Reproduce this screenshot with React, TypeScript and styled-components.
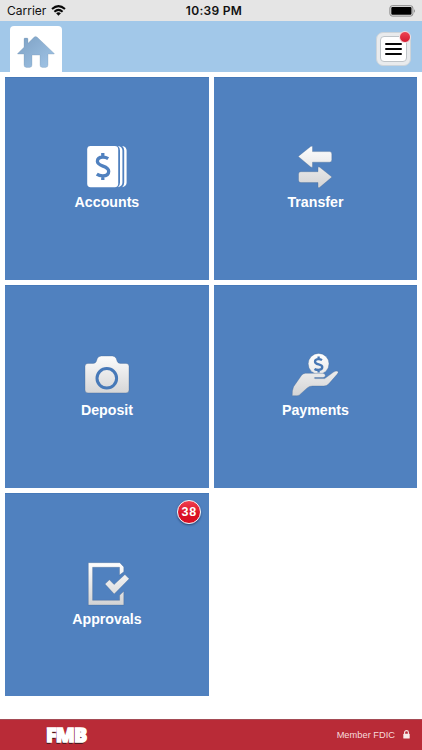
import React from "react";
import styled, { createGlobalStyle } from "styled-components";

const GlobalStyle = createGlobalStyle`
  * { box-sizing: border-box; }
  body { margin: 0; background: #fff; font-family: "Liberation Sans", Arial, sans-serif; }
  svg { display: block; }
`;

const Screen = styled.div`
  width: 422px;
  height: 750px;
  display: flex;
  flex-direction: column;
  background: #fff;
  overflow: hidden;
`;

const StatusBar = styled.div`
  height: 21px;
  flex: none;
  display: grid;
  grid-template-columns: 1fr auto 1fr;
  align-items: center;
  padding: 0 5px 0 7px;
  background: #e5e5e5;
  color: #111;
  font-family: Inter, sans-serif;
  font-size: 12px;
`;

const Carrier = styled.div`
  display: flex;
  align-items: center;
  gap: 5px;
`;

const Clock = styled.div`
  font-weight: 600;
  letter-spacing: 0.3px;
  padding-left: 4px;
`;

const BatterySlot = styled.div`
  display: flex;
  justify-content: flex-end;
`;

const Header = styled.header`
  height: 50.5px;
  flex: none;
  display: flex;
  justify-content: space-between;
  align-items: flex-start;
  padding: 5px 11px 0 10px;
  background: #a2c8e9;
`;

const HomeTab = styled.div`
  width: 51.5px;
  height: 46px;
  border-radius: 4px 4px 0 0;
  background: #fff;
  padding: 8px 0 0 7px;
`;

const MenuButton = styled.button`
  position: relative;
  width: 35px;
  height: 34px;
  margin: 6px 0 0;
  padding: 3px;
  border: 1px solid #cdd4da;
  border-radius: 7px;
  background: #e9ebed;
`;

const MenuFace = styled.span`
  display: flex;
  flex-direction: column;
  align-items: center;
  justify-content: center;
  gap: 2.6px;
  width: 27px;
  height: 26px;
  border: 1px solid #bfc4c8;
  border-radius: 4px;
  background: #fff;
`;

const MenuLine = styled.span`
  width: 17px;
  height: 2.5px;
  border-radius: 1px;
  background: #080808;
`;

const AlertDot = styled.span`
  position: absolute;
  top: -2px;
  right: -1px;
  width: 12px;
  height: 12px;
  border: 1px solid #f3dfe1;
  border-radius: 50%;
  background: linear-gradient(#ee4353, #d31a30);
`;

const Tiles = styled.main`
  flex: 1;
  display: grid;
  grid-template-columns: 203.5px 203.5px;
  grid-auto-rows: 203.4px;
  gap: 4.8px 5px;
  padding: 5px 5px 0 5.2px;
`;

const TileButton = styled.button`
  position: relative;
  display: flex;
  flex-direction: column;
  align-items: center;
  padding: 63.7px 0 0;
  border: 1px solid #4679b8;
  border-width: 1px 0 0;
  background: #5081bf;
  color: #fff;
  font-family: inherit;
`;

const TileLabel = styled.span`
  margin-top: 1px;
  font-size: 14.2px;
  font-weight: 700;
  line-height: 16px;
`;

const CountBadge = styled.span`
  position: absolute;
  top: 6px;
  right: 8px;
  width: 24px;
  height: 24px;
  display: flex;
  align-items: center;
  justify-content: center;
  border: 1.5px solid #f7f7f7;
  border-radius: 50%;
  background: linear-gradient(#f04050, #d90e23 60%);
  box-shadow: 0 1px 2px rgba(20, 30, 60, 0.6);
  font-size: 12.5px;
  font-weight: 700;
  letter-spacing: 0.8px;
  padding-left: 1px;
`;

const Footer = styled.footer`
  height: 31px;
  flex: none;
  display: flex;
  justify-content: space-between;
  align-items: center;
  padding: 0 12px 1px 46px;
  border-top: 1px solid #a44b55;
  background: #b92b37;
  color: #fff;
`;

const Brand = styled.span`
  display: block;
  font-family: "Open Sans", sans-serif;
  font-size: 20px;
  font-weight: 800;
  line-height: 20px;
  letter-spacing: -0.8px;
  transform: scaleX(0.98);
  transform-origin: left center;
  -webkit-text-stroke: 1.5px #fff;
  text-shadow: -1px 1px 0 #4d1b20, -1px 1.5px 0 #4d1b20;
`;

const Member = styled.span`
  display: flex;
  align-items: center;
  gap: 8px;
  color: #f7dcdc;
  font-size: 9.3px;
`;

const Silver = ({ id }: { id: string }) => (
  <defs>
    <linearGradient id={id} x1="0" y1="4" x2="0" y2="47" gradientUnits="userSpaceOnUse">
      <stop offset="0" stopColor="#fff" />
      <stop offset="1" stopColor="#d3d3d4" />
    </linearGradient>
  </defs>
);

const edge = { stroke: "#40628e", strokeOpacity: 0.55, strokeWidth: 0.6 };

const AccountsIcon = () => (
  <svg width="60" height="52" viewBox="0 0 60 52" fill="#fff">
    <rect x="10.2" y="5" width="31" height="41.2" rx="3.4" />
    <path d="M41 5q4.4.8 4.400 4.600v32q0 3.800-4.400 4.600q2-1.600 2-4.600V9.600q0-3-2-4.600z" />
    <path d="M45.200 5q4.400.8 4.400 4.600v32q0 3.800-4.400 4.600q2-1.600 2-4.600V9.600q0-3-2-4.600z" />
    <path d="M31.2 17.600q-2.300-1.500-5.300-1.500c-3.500 0-5.500 1.600-5.500 4.200c0 5.700 11.300 4 11.300 9.900c0 3-2.300 4.700-6 4.700q-3.500 0-5.900-1.700M25.800 12v4M25.800 35v4" fill="none" stroke="#5081bf" strokeWidth="3.300" />
  </svg>
);

const TransferIcon = () => (
  <svg width="60" height="52" viewBox="0 0 60 52" fill="url(#transfer)" strokeLinejoin="round">
    <Silver id="transfer" />
    <path {...edge} d="M13.2 15.4L25.6 5.6Q27.5 4.3 27.5 6.4v4.2H44.5q2.3 0 2.3 2.3v6q0 2.3-2.3 2.3H27.5v4q0 2-1.8.8z" />
    <path {...edge} d="M47 36L34.8 26.3Q33 25 33 27v3.7H15.8q-2.3 0-2.3 2.3v6.3q0 2.3 2.3 2.3H33v4q0 2 1.8.7z" />
  </svg>
);

const CameraIcon = () => (
  <svg width="60" height="52" viewBox="0 0 60 52" fill="url(#camera)">
    <Silver id="camera" />
    <path {...edge} d="M11 14.4h5.3q2.2 0 3-2l1-2.800Q21.3 7 24.2 7h11.2q2.8 0 3.8 2.600l1 2.800q.8 2 3 2H49q3 0 3 3v23.500q0 3-3 3H11q-3 0-3-3v-23.500q0-3 3-3z" />
    <circle cx="29.8" cy="29.300" r="9.8" fill="none" stroke="#4779b8" strokeWidth="3" />
  </svg>
);

const PaymentsIcon = () => (
  <svg width="60" height="52" viewBox="0 0 60 52" fill="url(#payments)">
    <Silver id="payments" />
    <circle {...edge} cx="33.6" cy="14.8" r="10.4" />
    <path d="M37 11.100q-1.500-1-3.400-1c-2.100 0-3.600 1-3.600 2.600c0 3.500 7.300 2 7.300 5.400c0 1.800-1.600 2.800-4 2.800q-2.200 0-3.800-1M33.600 7.500v3M33.600 20.500v3" fill="none" stroke="#4777b4" strokeWidth="2.300" />
    <path {...edge} d="M7.200 46.700Q7 41.200 8.600 37.700L16.400 26.500q1.300-2 4-2.200h17.200c3.700.2 3.500 4.200.3 4.200H29.800q-1.200.7.200 1.100h9.700l8.900-6.500q2.300-1.500 4.100-.8q1.300.8-.4 2.800L43.500 35.100q-1.800 1.900-4.600 1.900H27.400q-3 0-5.200 1.900l-8 7.300q-1.600.9-7 .5z" />
  </svg>
);

const ApprovalsIcon = () => (
  <svg width="60" height="52" viewBox="0 0 60 52" fill="url(#approvals)">
    <Silver id="approvals" />
    <path {...edge} d="M11.300 4.700h31.500l4 4.200v4.800l-4.300 3.400V9.300H15.600v33h27v-5.100l4.200-4v13.900H11.300z" />
    <path {...edge} d="M28 26.100l4.400-4.300l4.700 4.800l10.800-10.100l4.300 4.300l-15 15.200z" />
  </svg>
);

const tiles = [
  { label: "Accounts", Icon: AccountsIcon },
  { label: "Transfer", Icon: TransferIcon },
  { label: "Deposit", Icon: CameraIcon },
  { label: "Payments", Icon: PaymentsIcon },
  { label: "Approvals", Icon: ApprovalsIcon, count: 38 },
];

export default function App() {
  return (
    <Screen>
      <GlobalStyle />
      <StatusBar>
        <Carrier>
          Carrier
          <svg width="15" height="11" viewBox="0 0 15 11" fill="none" stroke="#080808" strokeWidth="2">
            <path d="M1 4Q7.5-1.8 14 4M3.4 6.7q4.1-3.6 8.2 0" />
            <path d="M5.1 8.2q2.4-2 4.8 0L7.5 10.7z" fill="#080808" stroke="none" />
          </svg>
        </Carrier>
        <Clock>10:39 PM</Clock>
        <BatterySlot>
          <svg width="28" height="12" viewBox="0 0 28 12">
            <rect x=".9" y=".7" width="23" height="10.4" rx="2.4" fill="#e5e5e5" stroke="#888" />
            <rect x="2.3" y="2.1" width="20.2" height="7.6" rx="1" fill="#000" />
            <path d="M25 4q1.8 2 0 4z" fill="#777" />
          </svg>
        </BatterySlot>
      </StatusBar>
      <Header>
        <HomeTab>
          <svg width="38" height="35" viewBox="0 0 38 35">
            <defs>
              <linearGradient id="home" x1="0" y1="0" x2="1" y2="1">
                <stop offset="0" stopColor="#7da0c3" />
                <stop offset="1" stopColor="#a1c5e7" />
              </linearGradient>
            </defs>
            <path d="M.7 19.4L7 13.2V5q0-.9.9-.9h2.2q.9 0 .9.9v4.2l6.2-6.1q1.4-1.4 2.8 0L37.2 19.4q.4.7-.4.7H31V31q0 2.4-2.4 2.4h-3.3q-2.3 0-2.3-2.3v-10h-8v10q0 2.3-2.3 2.3H9.3Q7 33.4 7 31V20.1H1q-.8 0-.3-.7z" fill="url(#home)" stroke="#6e8eac" strokeOpacity=".5" strokeWidth=".5" />
          </svg>
        </HomeTab>
        <MenuButton aria-label="Menu">
          <MenuFace>
            <MenuLine />
            <MenuLine />
            <MenuLine />
          </MenuFace>
          <AlertDot />
        </MenuButton>
      </Header>
      <Tiles>
        {tiles.map(({ label, Icon, count }) => (
          <TileButton key={label}>
            <Icon />
            <TileLabel>{label}</TileLabel>
            {count && <CountBadge>{count}</CountBadge>}
          </TileButton>
        ))}
      </Tiles>
      <Footer>
        <Brand>FMB</Brand>
        <Member>
          Member FDIC
          <svg width="7" height="9" viewBox="0 0 7 9">
            <rect x=".3" y="3.8" width="6.4" height="4.8" rx=".6" fill="#f8e9e7" />
            <path d="M1.6 4V2.5a1.9 1.9 0 0 1 3.8 0V4" fill="none" stroke="#f8e9e7" strokeWidth="1.1" />
          </svg>
        </Member>
      </Footer>
    </Screen>
  );
}
